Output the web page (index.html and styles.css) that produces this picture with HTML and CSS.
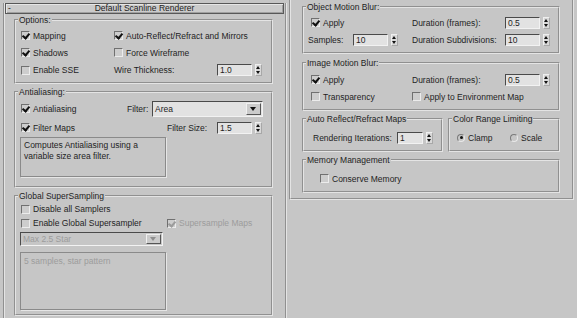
FILE: index.html
```html
<!DOCTYPE html>
<html lang="en">

<head>
    <meta charset="UTF-8">
    <title>Default Scanline Renderer</title>
    <link rel="stylesheet" href="styles.css">
</head>

<body>
    <div class="panes">
        <!-- left rollout -->
        <div class="rollout rollout-left">
            <div class="rollout-title"><span class="toggle">-</span>Default Scanline Renderer</div>

            <fieldset class="group g-options">
                <legend>Options:</legend>
                <div class="row">
                    <span class="cell w98"><span class="check on"></span>Mapping</span>
                    <span class="cell flat"><span class="check on"></span>Auto-Reflect/Refract and Mirrors</span>
                </div>
                <div class="row">
                    <span class="cell w98"><span class="check on"></span>Shadows</span>
                    <span class="cell flat"><span class="check"></span>Force Wireframe</span>
                </div>
                <div class="row tall">
                    <span class="cell w98"><span class="check"></span>Enable SSE</span>
                    <span class="label w103">Wire Thickness:</span>
                    <span class="spin"><span class="field w35">1.0</span><span class="arrows"></span></span>
                </div>
            </fieldset>

            <fieldset class="group g-aa">
                <legend>Antialiasing:</legend>
                <div class="row">
                    <span class="cell w111"><span class="check on"></span>Antialiasing</span>
                    <span class="label w25">Filter:</span>
                    <span class="combo w111"><span class="combo-text">Area</span><span class="combo-btn"></span></span>
                </div>
                <div class="row gap2">
                    <span class="cell w151"><span class="check on"></span>Filter Maps</span>
                    <span class="label w50">Filter Size:</span>
                    <span class="spin"><span class="field w35">1.5</span><span class="arrows"></span></span>
                </div>
                <div class="desc">Computes Antialiasing using a<br>variable size area filter.</div>
            </fieldset>

            <fieldset class="group g-ss">
                <legend>Global SuperSampling</legend>
                <div class="row short">
                    <span class="cell"><span class="check"></span>Disable all Samplers</span>
                </div>
                <div class="row short">
                    <span class="cell w151"><span class="check"></span>Enable Global Supersampler</span>
                    <span class="cell flat disabled"><span class="check on"></span>Supersample Maps</span>
                </div>
                <span class="combo small disabled"><span class="combo-text">Max 2.5 Star</span><span class="combo-btn"></span></span>
                <div class="desc tall-desc disabled">5 samples, star pattern</div>
            </fieldset>
        </div>

        <!-- right rollout -->
        <div class="rollout rollout-right">
            <fieldset class="group g-omb">
                <legend>Object Motion Blur:</legend>
                <div class="row">
                    <span class="cell w108"><span class="check on"></span>Apply</span>
                    <span class="label w93">Duration (frames):</span>
                    <span class="spin"><span class="field w35">0.5</span><span class="arrows"></span></span>
                </div>
                <div class="row">
                    <span class="cell w108">
                        <span class="label w45 ml4">Samples:</span>
                        <span class="spin"><span class="field w35">10</span><span class="arrows"></span></span>
                    </span>
                    <span class="label w93">Duration Subdivisions:</span>
                    <span class="spin"><span class="field w35">10</span><span class="arrows"></span></span>
                </div>
            </fieldset>

            <fieldset class="group g-imb">
                <legend>Image Motion Blur:</legend>
                <div class="row">
                    <span class="cell w108"><span class="check on"></span>Apply</span>
                    <span class="label w93">Duration (frames):</span>
                    <span class="spin"><span class="field w35">0.5</span><span class="arrows"></span></span>
                </div>
                <div class="row">
                    <span class="cell w108"><span class="check"></span>Transparency</span>
                    <span class="cell flat"><span class="check"></span>Apply to Environment Map</span>
                </div>
            </fieldset>

            <div class="pair">
                <fieldset class="group g-arm">
                    <legend>Auto Reflect/Refract Maps</legend>
                    <div class="row">
                        <span class="label w84 ml9">Rendering Iterations:</span>
                        <span class="spin"><span class="field w26">1</span><span class="arrows"></span></span>
                    </div>
                </fieldset>
                <fieldset class="group g-crl">
                    <legend>Color Range Limiting</legend>
                    <div class="row">
                        <span class="cell w60"><span class="radio on"></span>Clamp</span>
                        <span class="cell flat"><span class="radio"></span>Scale</span>
                    </div>
                </fieldset>
            </div>

            <fieldset class="group g-mem">
                <legend>Memory Management</legend>
                <div class="row">
                    <span class="cell ml16"><span class="check"></span>Conserve Memory</span>
                </div>
            </fieldset>
        </div>
    </div>
</body>

</html>
```

FILE: styles.css
```css
* {
    margin: 0;
    padding: 0;
    box-sizing: border-box;
}

body {
    background: #c6c6c6;
    font-family: "Liberation Sans", Arial, sans-serif;
    font-size: 8.5px;
    color: #1e1e1e;
    width: 577px;
    height: 318px;
    overflow: hidden;
}

.panes {
    display: flex;
    align-items: flex-start;
}

/* rollouts */
.rollout {
    border-left: 2px groove #e4e4e4;
    border-right: 2px groove #e4e4e4;
}

.rollout-left {
    margin: 3px 0 0 3px;
    width: 284px;
    height: 315px;
}

.rollout-right {
    margin-left: 2px;
    width: 285px;
    border-bottom: 2px groove #e4e4e4;
    padding: 0 0 5px 11px;
}

.rollout-title {
    position: relative;
    height: 11px;
    margin-right: 1px;
    border: 1px solid #585858;
    box-shadow: inset 1px 1px 0 #e6e6e6, inset -1px -1px 0 #a0a0a0;
    background: #cbcbcb;
    text-align: center;
    line-height: 9px;
}

.toggle {
    position: absolute;
    left: 2px;
    top: 0;
}

/* group boxes */
.group {
    border: 2px groove #e4e4e4;
    min-width: 0;
}

.group legend {
    line-height: 10px;
    margin-left: 2px;
    padding: 0 1px;
}

.rollout-left .group {
    width: 259px;
    margin-left: 9px;
}

.rollout-right .group {
    width: 258px;
}

.g-options {
    margin-top: 1px;
    padding: 2px 0 3px;
}

.g-aa {
    margin-top: 3px;
    padding: 3px 0 9px;
}

.g-ss {
    margin-top: 3px;
    padding: 1px 0 4px;
}

.g-omb {
    margin-top: 2px;
    padding: 2px 0 4px;
}

.g-imb {
    margin-top: 4px;
    padding: 3px 0 4px;
}

.pair {
    display: flex;
    gap: 5px;
    margin-top: 3px;
}

.rollout-right .pair .g-arm {
    width: 141px;
    padding: 5px 0 4px;
}

.rollout-right .pair .g-crl {
    width: 112px;
    padding: 5px 0 4px;
}

.g-mem {
    margin-top: 3px;
    padding: 5px 0 4px;
}

/* rows */
.row {
    display: flex;
    align-items: center;
    height: 17px;
    white-space: nowrap;
}

.row.tall {
    height: 18px;
}

.row.short {
    height: 14px;
}

.gap2 {
    margin-top: 2px;
}

.cell {
    display: flex;
    align-items: center;
}

.cell > .check,
.cell > .radio {
    margin: 0 3px 0 5px;
}

.rollout-right .cell > .check,
.rollout-right .cell > .radio {
    margin-left: 7px;
}

.cell.flat > .check,
.cell.flat > .radio,
.rollout-right .cell.flat > .check,
.rollout-right .cell.flat > .radio {
    margin-left: 0;
}

.rollout-right .ml16 > .check {
    margin-left: 16px;
}

.label {
    flex: none;
}

.w25 { width: 25px; }
.w45 { width: 45px; }
.w50 { width: 50px; }
.w60 { width: 60px; }
.w84 { width: 84px; }
.w93 { width: 93px; }
.w98 { width: 98px; }
.w103 { width: 103px; }
.w108 { width: 108px; }
.w111 { width: 111px; }
.w151 { width: 151px; }
.ml4 { margin-left: 4px; }
.ml9 { margin-left: 9px; }

.disabled {
    color: #9c9c9c;
}

/* checkbox */
.check {
    flex: none;
    width: 9px;
    height: 9px;
    border: 1px solid;
    border-color: #707070 #ececec #ececec #707070;
    background: #cdcdcd;
    position: relative;
}

.check.on::after {
    content: "";
    position: absolute;
    left: 1px;
    top: 0;
    width: 3px;
    height: 5px;
    border: solid #111;
    border-width: 0 2px 2px 0;
    transform: rotate(40deg);
    transform-origin: 60% 60%;
}

.disabled .check.on::after {
    border-color: #9c9c9c;
}

/* radio */
.radio {
    flex: none;
    width: 8px;
    height: 8px;
    border-radius: 50%;
    border: 1px solid;
    border-color: #7a7a7a #e8e8e8 #e8e8e8 #7a7a7a;
    position: relative;
}

.radio.on::after {
    content: "";
    position: absolute;
    left: 1.5px;
    top: 1.5px;
    width: 3px;
    height: 3px;
    border-radius: 50%;
    background: #111;
}

/* spinner */
.spin {
    display: flex;
    align-items: center;
    gap: 3px;
}

.field {
    height: 12px;
    border: 1px solid;
    border-color: #4a4a4a #f2f2f2 #f2f2f2 #4a4a4a;
    background: #e2e2e2;
    line-height: 10px;
    padding-left: 2px;
}

.w35 { width: 35px; }
.w26 { width: 26px; }

.arrows {
    position: relative;
    width: 7px;
    height: 12px;
    background: #d8d8d8;
    border: 1px solid;
    border-color: #efefef #a8a8a8 #a8a8a8 #efefef;
}

.arrows::before,
.arrows::after {
    content: "";
    position: absolute;
    left: 0;
    border-left: 2.5px solid transparent;
    border-right: 2.5px solid transparent;
}

.arrows::before {
    top: 1px;
    border-bottom: 3px solid #111;
}

.arrows::after {
    top: 6px;
    border-top: 3px solid #111;
}

/* combo box */
.combo {
    display: flex;
    height: 16px;
    border: 1px solid;
    border-color: #4a4a4a #f2f2f2 #f2f2f2 #4a4a4a;
    background: #e2e2e2;
}

.combo-text {
    flex: 1;
    line-height: 14px;
    padding-left: 2px;
}

.combo-btn {
    width: 15px;
    margin: 1px;
    border: 1px solid;
    border-color: #f0f0f0 #555 #555 #f0f0f0;
    background: #cbcbcb;
    position: relative;
}

.combo-btn::after {
    content: "";
    position: absolute;
    left: 3px;
    top: 3px;
    border: 3px solid transparent;
    border-top: 4px solid #111;
}

.combo.small {
    width: 143px;
    height: 14px;
    margin: 2px 0 0 4px;
    background: #c6c6c6;
}

.combo.small .combo-text {
    line-height: 12px;
}

.combo.small .combo-btn::after {
    top: 2px;
    border-top-color: #8e8e8e;
}

/* description boxes */
.desc {
    margin: 1px 0 0 4px;
    width: 146px;
    height: 40px;
    border: 1px solid #8a8a8a;
    box-shadow: 1px 1px 0 #e6e6e6;
    padding: 2px 3px;
    line-height: 11px;
}

.desc.tall-desc {
    margin-top: 6px;
    height: 58px;
    padding-top: 3px;
}
```
